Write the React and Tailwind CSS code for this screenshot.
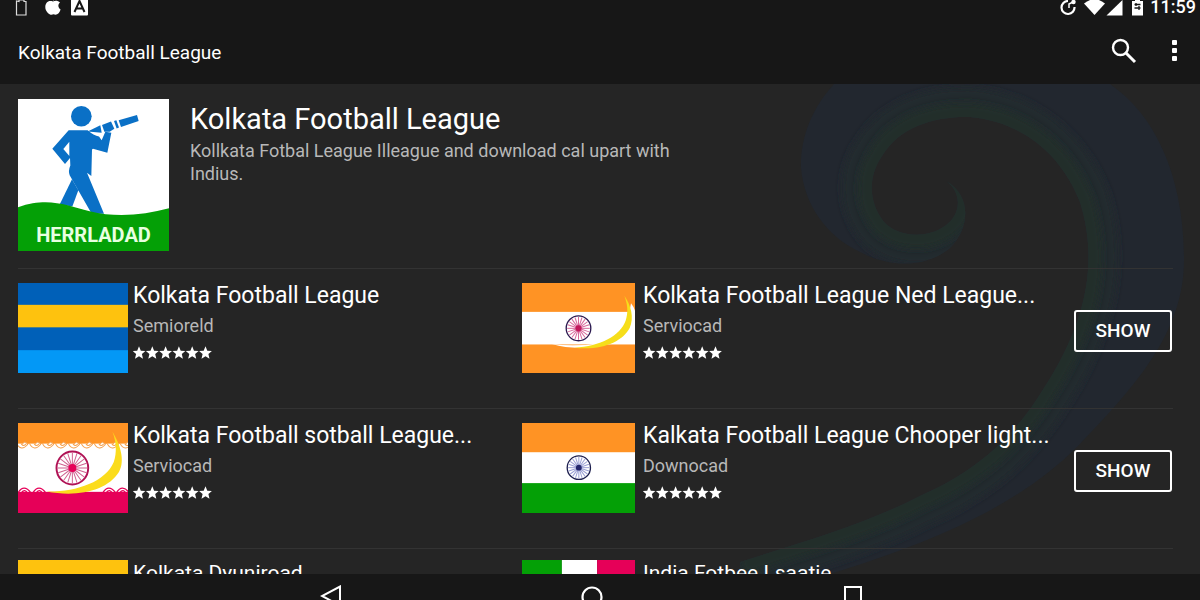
import React from 'react';

const rows = [
  {
    padding: 'pt-[14px]',
    titleSize: 'text-[23px]',
    items: [
      { title: 'Kolkata Football League', author: 'Semioreld', flag: 'stripes' },
      { title: 'Kolkata Football League Ned League...', author: 'Serviocad', flag: 'saffron', action: true },
    ],
  },
  {
    padding: 'pt-[14px]',
    titleSize: 'text-[23px]',
    items: [
      { title: 'Kolkata Football sotball League...', author: 'Serviocad', flag: 'lace' },
      { title: 'Kalkata Football League Chooper light...', author: 'Downocad', flag: 'india', action: true },
    ],
  },
  {
    padding: 'pt-[11px]',
    titleSize: 'text-[21px]',
    items: [
      { title: 'Kolkata Dyuniroad', author: 'Serviocad', flag: 'yellow' },
      { title: 'India Fotbee Lsaatie', author: 'Downocad', flag: 'tricolor' },
    ],
  },
];

const Wheel = ({ cx, cy, r, rim, spoke, hub, width }) => (
  <g>
    <circle cx={cx} cy={cy} r={r} fill="#fff" stroke={rim} strokeWidth={width} />
    {Array.from({ length: 20 }, (_, i) => {
      const a = (i * Math.PI) / 10;
      return (
        <line
          key={i}
          x1={cx}
          y1={cy}
          x2={cx + Math.cos(a) * (r - 3)}
          y2={cy + Math.sin(a) * (r - 3)}
          stroke={spoke}
          strokeWidth="3"
        />
      );
    })}
    <circle cx={cx} cy={cy} r={r / 4} fill={hub} />
  </g>
);

const Flag = ({ name }) => {
  const props = {
    viewBox: '0 0 340 268',
    preserveAspectRatio: 'none',
    className: 'block h-full w-full',
    'aria-hidden': true,
  };

  if (name === 'stripes') {
    return (
      <svg {...props}>
        <rect width="340" height="268" fill="#0060b8" />
        <rect y="65" width="340" height="67" fill="#fec20e" />
        <rect y="200" width="340" height="68" fill="#0398f6" />
      </svg>
    );
  }

  if (name === 'saffron') {
    return (
      <svg {...props}>
        <rect width="340" height="268" fill="#ff9324" />
        <rect y="86" width="340" height="97" fill="#fff" />
        <path d="M328 60 Q336 70 340 82 L340 92 L322 92Z" fill="#fff" />
        <path d="M90 182 Q160 190 230 180 L240 187 Q160 202 90 182Z" fill="#fff" />
        <path d="M308 38 C328 66 338 104 324 134 C304 172 246 202 158 193 C236 188 296 158 312 112 C320 88 318 64 308 38Z" fill="#f6de1a" />
        <Wheel cx={170} cy={135} r={37} rim="#2b1a50" spoke="#d86a9c" hub="#c2185b" width={4} />
      </svg>
    );
  }

  if (name === 'lace') {
    return (
      <svg {...props}>
        <rect width="340" height="268" fill="#fff" />
        <rect width="340" height="62" fill="#ff9324" />
        <rect y="205" width="340" height="63" fill="#e60058" />
        {[0, 1, 2, 3, 4, 5, 6, 7, 8].map((i) => (
          <g key={i} fill="none" strokeWidth="3">
            <path d={`M${i * 40 - 4} 62 q14 24 34 2 q-8 -14 -16 -2`} stroke="#f5a04c" fill="#fff" />
            <path d={`M${i * 40 + 10} 62 q8 10 15 0`} stroke="#f5a04c" />
          </g>
        ))}
        {[0, 46, 262, 304].map((x) => (
          <g key={x} fill="none" stroke="#e60058" strokeWidth="4">
            <path d={`M${x} 208 q18 -28 40 0`} />
            <path d={`M${x + 10} 208 q12 -14 20 2`} />
          </g>
        ))}
        <path d="M292 26 C316 64 332 112 312 146 C276 202 184 222 88 204 C178 206 270 176 296 116 C306 88 304 56 292 26Z" fill="#fbdc1c" />
        <Wheel cx={168} cy={134} r={49} rim="#b01255" spoke="#cf5f8e" hub="#e60058" width={6} />
      </svg>
    );
  }

  if (name === 'india') {
    return (
      <svg {...props}>
        <rect width="340" height="268" fill="#fff" />
        <rect width="340" height="87" fill="#ff9324" />
        <rect y="179" width="340" height="89" fill="#04a006" />
        <Wheel cx={171} cy={133} r={35} rim="#1d1f4e" spoke="#9a9fd4" hub="#23256b" width={4} />
      </svg>
    );
  }

  if (name === 'yellow') {
    return (
      <svg {...props}>
        <rect width="340" height="268" fill="#fec20e" />
      </svg>
    );
  }

  return (
    <svg {...props}>
      <rect width="120" height="268" fill="#04a006" />
      <rect x="120" width="106" height="268" fill="#fff" />
      <rect x="226" width="114" height="268" fill="#e60058" />
    </svg>
  );
};

const Stars = () => (
  <svg viewBox="0 0 80 14" className="mt-2 block h-[14px] w-20 fill-white" role="img" aria-label="6 stars">
    {[0, 1, 2, 3, 4, 5].map((i) => (
      <path
        key={i}
        transform={`translate(${i * 13.3} 0)`}
        d="M6 .3 7.800 4.700 12.400 5 8.900 8.100 10 12.800 6 10.200 2 12.800 3.100 8.100 -.400 5 4.200 4.700Z"
      />
    ))}
  </svg>
);

const AppItem = ({ item, titleSize, wide }) => (
  <div className={wide ? 'flex min-w-0 gap-2' : 'flex min-w-0 gap-[5px]'}>
    <div className={wide ? 'h-[90px] w-[113px] shrink-0' : 'h-[90px] w-[110px] shrink-0'}>
      <Flag name={item.flag} />
    </div>
    <div className="min-w-0 flex-1">
      <h2 className={`truncate leading-[26px] ${titleSize}`}>{item.title}</h2>
      <p className="mt-[5px] text-[18px] leading-6 text-[#b8b8b8]">{item.author}</p>
      <Stars />
    </div>
    {item.action && (
      <button
        type="button"
        className="mt-[27px] mr-px h-[42px] w-[98px] shrink-0 rounded-[3px] border-2 border-white text-[19px] leading-6 font-medium"
      >
        SHOW
      </button>
    )}
  </div>
);

const HeroLogo = () => (
  <div className="relative h-[152px] w-[151px] shrink-0 bg-white">
    <svg viewBox="55 28 453 458" preserveAspectRatio="none" className="block h-full w-full" aria-hidden="true">
      <g fill="#0a70c6">
        <circle cx="245" cy="80" r="31" />
        <path d="M207 122 H264 Q282 138 298 141 L306 152 L317 127 L335 130 L323 190 L280 178 L277 180 L275 260 L262 250 L313 374 L276 374 L210 258 Q205 244 212 228 L211 206 L196 224 L158 178Z" />
        <path d="M217 270 L236 303 L218 352 L180 346Z" />
        <path d="M264 126 L302 107 L306 130Z" />
        <path d="M307 106 L334 96 L344 118 L330 127 L314 127Z" />
        <path d="M343 94 L350 92 L358 114 L351 117Z" />
        <path d="M357 92 L412 76 L417 94 L364 112Z" />
      </g>
      <path d="M209 157 V200 L191 179Z" fill="#fff" />
      <path d="M55 354 C150 322 200 350 270 366 C350 386 430 378 508 357 V486 H55Z" fill="#04a006" />
    </svg>
    <span className="absolute inset-x-0 bottom-1 text-center text-[20px] leading-6 font-bold text-[#e8ffe0]">
      HERRLADAD
    </span>
  </div>
);

const Swirl = () => {
  const inner =
    'M246 97 C262 108 262 130 245 142 C225 156 196 152 184 138 C168 118 168 92 182 72 C200 42 236 32 270 33 C324 38 362 72 380 118 C398 176 388 236 344 304 C316 350 280 386 220 412 C170 438 110 456 40 478';
  return (
    <svg viewBox="0 0 500 490" className="absolute top-0 right-0 w-[500px]" aria-hidden="true">
      <defs>
        <filter id="soft" x="-20%" y="-20%" width="140%" height="140%">
          <feGaussianBlur stdDeviation="3" />
        </filter>
        <clipPath id="swirl">
          <path
            d={`${inner} L40 490 L130 490 C240 456 320 420 378 362 C436 302 484 248 484 176 C484 90 454 30 410 0 L134 0 C112 24 100 54 101 84 C104 120 126 152 160 168 C190 184 226 184 250 164 C270 144 272 112 246 97Z`}
          />
        </clipPath>
      </defs>
      <g clipPath="url(#swirl)">
        <rect width="500" height="490" fill="#22272f" />
        <path d={inner} fill="none" stroke="#21292e" strokeWidth="60" filter="url(#soft)" />
        <path d={inner} fill="none" stroke="#202f2b" strokeWidth="28" filter="url(#soft)" />
      </g>
    </svg>
  );
};

const StatusBar = () => (
  <div className="flex h-4 items-start justify-between overflow-hidden pl-[14px]">
    <svg viewBox="0 0 76 16" className="h-4 w-[76px]" aria-hidden="true">
      <path d="M2.500 1V15H12V1.500H10V0H5V1.500Z" fill="none" stroke="#ddd" strokeWidth="1.200" />
      <path
        d="M39 1.500C41 .5 44 .5 46 2.500C43.500 4.500 44 8 46.600 9.500C45.500 13 43 16 39.500 14.300C36 16 33 13 31.500 9C30.500 4 33.500 -.5 39 1.500Z M39 .8C39 -1 40 -2 42 -2Z"
        fill="#fff"
      />
      <rect x="57" y="-3" width="17" height="18.500" rx="1" fill="#fff" />
      <path d="M60.500 12 65.500 1 70.500 12M62.500 8.500H68.500" fill="none" stroke="#171717" strokeWidth="2" />
    </svg>
    <div className="flex items-start gap-[5px] pr-1">
      <svg viewBox="0 0 86 16" className="h-4 w-[86px]" aria-hidden="true">
        <path d="M9 1A6.500 6.500 0 1 0 15.500 7" fill="none" stroke="#fff" strokeWidth="2.200" />
        <path d="M10 8V4L14 2" fill="none" stroke="#fff" strokeWidth="1.500" />
        <circle cx="14.500" cy="2" r="2.200" fill="#fff" />
        <path d="M25 3.500Q35.500 -5 46 3.500L35.500 15Z" fill="#fff" />
        <path d="M47.500 15.500 63.500 0V15.500Z" fill="#fff" />
        <path d="M73 1H76V-1H81V1H84V15.500H73Z" fill="#fff" />
        <path d="M75.500 4.500H81.500M75.500 8H81.500M77 3V6M80 6V10" stroke="#171717" strokeWidth="1.300" />
      </svg>
      <span className="-mt-[3px] text-[18px] leading-5 font-medium">11:59</span>
    </div>
  </div>
);

const TopBar = () => (
  <header className="h-[84px] shrink-0 bg-[#171717]">
    <StatusBar />
    <div className="flex items-center justify-between pt-[22px] pr-[19px] pl-[18px]">
      <h1 className="text-[19px] leading-[30px]">Kolkata Football League</h1>
      <div className="flex items-center gap-[30px] pb-1">
        <button type="button" aria-label="Search">
          <svg viewBox="0 0 26 26" className="block h-[26px] w-[26px]" fill="none" stroke="#fff">
            <circle cx="9.500" cy="9.500" r="7.500" strokeWidth="2.400" />
            <path d="M15 15 24 24" strokeWidth="3" />
          </svg>
        </button>
        <button type="button" aria-label="More options">
          <svg viewBox="0 0 14 26" className="block h-[26px] w-[14px]" fill="#fff">
            <rect x="5" y="2" width="5" height="5" rx="1" />
            <rect x="5" y="10" width="5" height="5" rx="1" />
            <rect x="5" y="18" width="5" height="5" rx="1" />
          </svg>
        </button>
      </div>
    </div>
  </header>
);

const NavBar = () => (
  <nav className="flex h-[26px] shrink-0 justify-center overflow-hidden bg-[#171717] pt-[11px] pr-4">
    <button type="button" aria-label="Back" className="flex w-[261px] justify-center">
      <svg viewBox="0 0 22 22" className="h-[22px] w-[22px]" fill="none" stroke="#fff" strokeWidth="2">
        <path d="M20 1.500V20.500L2 11Z" />
      </svg>
    </button>
    <button type="button" aria-label="Home" className="flex w-[261px] justify-center">
      <svg viewBox="0 0 22 22" className="h-[22px] w-[22px]" fill="none" stroke="#fff" strokeWidth="2.200">
        <circle cx="11" cy="12" r="9.500" />
      </svg>
    </button>
    <button type="button" aria-label="Recent apps" className="flex w-[261px] justify-center">
      <svg viewBox="0 0 22 22" className="h-[22px] w-[22px]" fill="none" stroke="#fff" strokeWidth="2">
        <rect x="3" y="2" width="16" height="18" />
      </svg>
    </button>
  </nav>
);

const App = () => {
  return (
    <div className="flex h-screen flex-col overflow-hidden bg-[#252525] font-[Roboto,sans-serif] text-white">
      <TopBar />
      <main className="relative min-h-0 flex-1 overflow-hidden">
        <Swirl />
        <div className="relative pr-[27px] pl-[18px]">
          <section className="flex gap-[21px] pt-[15px] pb-[17px]">
            <HeroLogo />
            <div>
              <h2 className="mt-1 text-[29px] leading-8">Kolkata Football League</h2>
              <p className="mt-1 max-w-[510px] text-[18px] leading-[23px] text-[#b8b8b8]">
                Kollkata Fotbal League Illeague and download cal upart with Indius.
              </p>
            </div>
          </section>
          {rows.map((row, i) => (
            <section
              key={i}
              className={`grid h-[140px] grid-cols-[504fr_651fr] border-t border-[#333] ${row.padding}`}
            >
              <AppItem item={row.items[0]} titleSize={row.titleSize} />
              <AppItem item={row.items[1]} titleSize={row.titleSize} wide />
            </section>
          ))}
        </div>
      </main>
      <NavBar />
    </div>
  );
};

export default App;
